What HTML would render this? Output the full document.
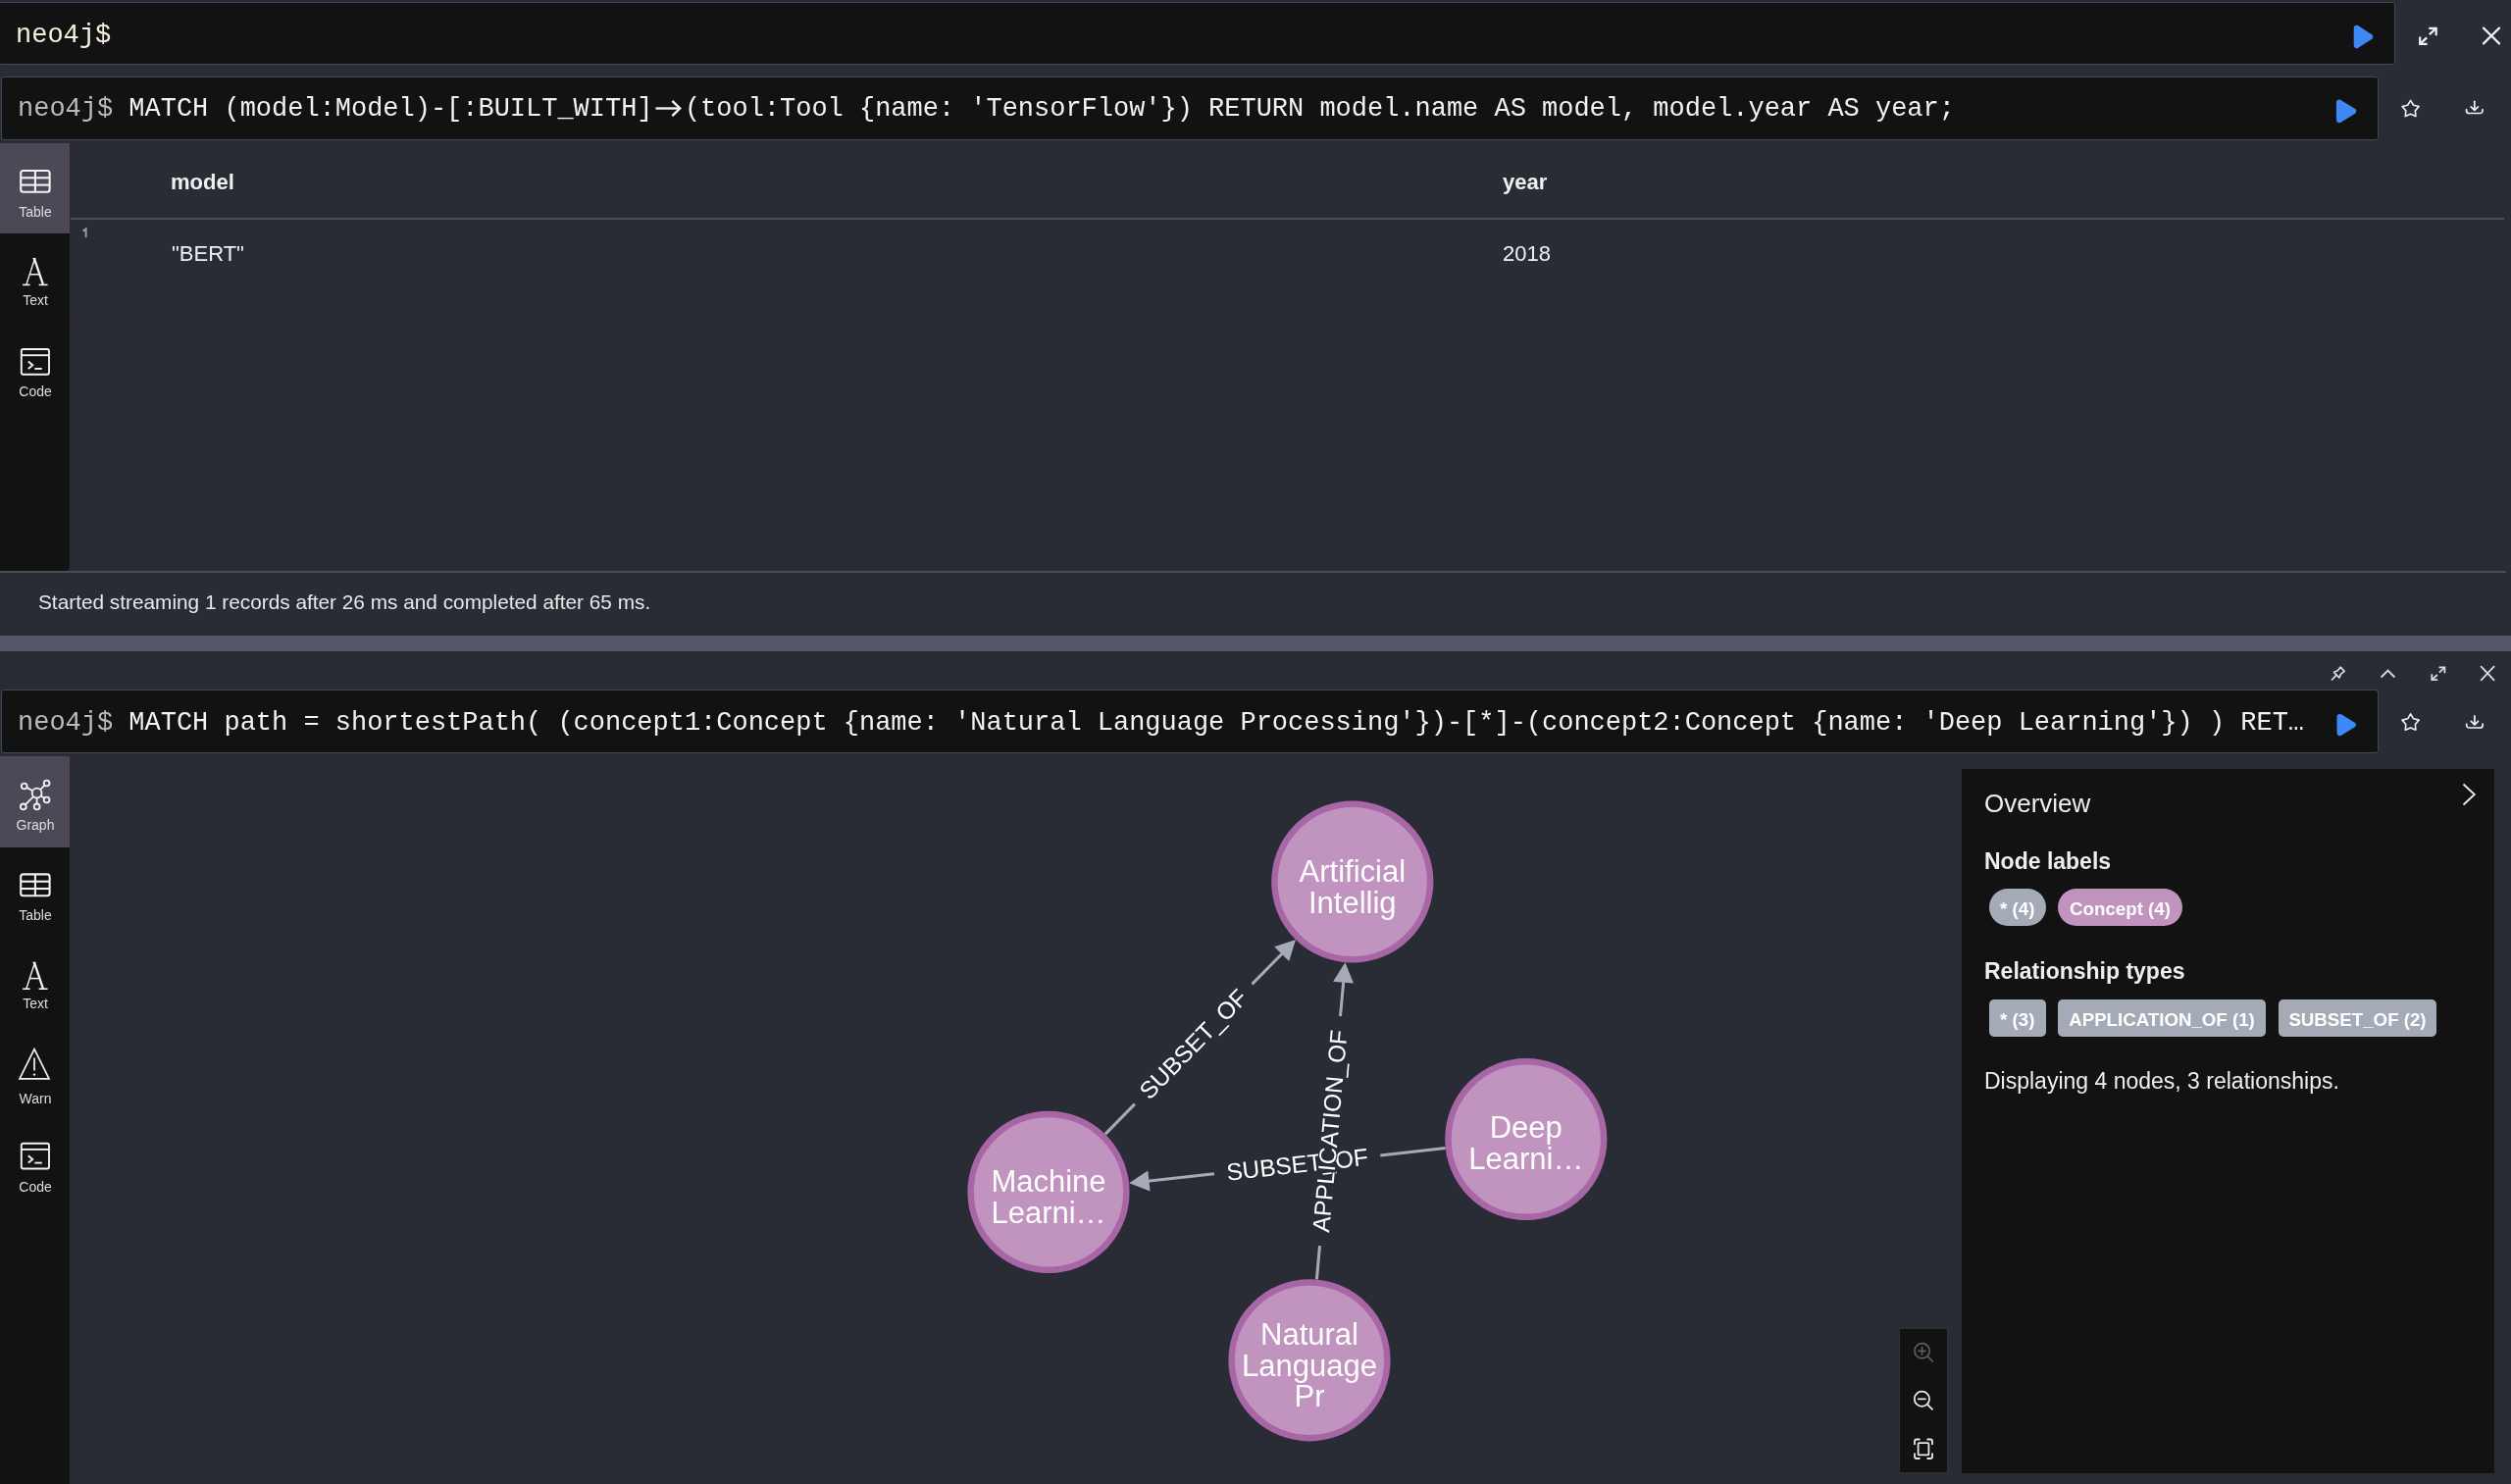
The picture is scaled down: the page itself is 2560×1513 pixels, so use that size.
<!DOCTYPE html>
<html><head><meta charset="utf-8"><style>
html,body{margin:0;padding:0;}
body{width:2560px;height:1513px;background:#292c35;position:relative;overflow:hidden;font-family:'Liberation Sans', sans-serif;}
.t{position:absolute;line-height:1;white-space:nowrap;will-change:transform;}
.r{position:absolute;}
.lig{display:inline-block;width:2ch;text-align:center;}
.pill{color:#fff;font-weight:bold;font-size:18.7px;box-sizing:border-box;padding-top:1.5px;text-align:center;white-space:nowrap;}
.lbl{width:80px;text-align:center;font-size:14px;color:#dedede;}
svg.g{position:absolute;left:0;top:0;will-change:transform;}
.pill{will-change:transform;}
</style></head><body>
<div class="r" style="left:-2px;top:1.8px;width:2443.5px;height:64px;background:#121212;border:1px solid #3b4a57;border-radius:3px;box-sizing:border-box;"></div>
<div class="t" style="left:16.0px;top:22.5px;font-size:27px;color:#f5f0de;font-weight:normal;font-family:'Liberation Mono', monospace;transform:scaleY(1.04);transform-origin:0 20.7px;">neo4j$</div>
<div class="r" style="left:1px;top:78.3px;width:2423.5px;height:64.5px;background:#121212;border:1px solid #3b4a57;border-radius:3px;box-sizing:border-box;"></div>
<div class="t" style="left:18.0px;top:98.3px;font-size:27px;color:#f2f2f2;font-weight:normal;font-family:'Liberation Mono', monospace;white-space:pre;letter-spacing:-0.015px;transform:scaleY(1.04);transform-origin:0 20.7px;"><span style="color:#b8babf">neo4j$ </span>MATCH (model:Model)-[:BUILT_WITH]  (tool:Tool {name: 'TensorFlow'}) RETURN model.name AS model, model.year AS year;</div>
<div class="r" style="left:0px;top:146px;width:71px;height:436px;background:#121212;border-bottom-right-radius:4px;"></div>
<div class="r" style="left:0px;top:146px;width:71px;height:92px;background:#4c4855;"></div>
<div class="t" style="left:173.6px;top:175.2px;font-size:22px;color:#f0f0f0;font-weight:bold;font-family:'Liberation Sans', sans-serif;">model</div>
<div class="t" style="left:1531.5px;top:175.2px;font-size:22px;color:#f0f0f0;font-weight:bold;font-family:'Liberation Sans', sans-serif;">year</div>
<div class="r" style="left:72px;top:222.2px;width:2482px;height:1.4px;background:#4a4d55;"></div>
<div class="r" style="left:73.5px;top:329.4px;width:2479px;height:2.6px;background:#2a2b31;"></div>
<div class="r" style="left:2552.5px;top:146px;width:2.6px;height:184px;background:#2a2b31;"></div>
<div class="t" style="left:174.5px;top:248.0px;font-size:22px;color:#f0f0f0;font-weight:normal;font-family:'Liberation Sans', sans-serif;">"BERT"</div>
<div class="t" style="left:1532.0px;top:248.0px;font-size:22px;color:#f0f0f0;font-weight:normal;font-family:'Liberation Sans', sans-serif;">2018</div>
<div class="r" style="left:0px;top:582.3px;width:2555px;height:1.4px;background:#4a4d55;"></div>
<div class="t" style="left:38.5px;top:604.2px;font-size:20.8px;color:#e8e8e8;font-weight:normal;font-family:'Liberation Sans', sans-serif;">Started streaming 1 records after 26 ms and completed after 65 ms.</div>
<div class="r" style="left:0px;top:648px;width:2560px;height:15.5px;background:#535664;"></div>
<div class="r" style="left:1px;top:703.3px;width:2423.5px;height:64.5px;background:#121212;border:1px solid #3b4a57;border-radius:3px;box-sizing:border-box;"></div>
<div class="t" style="left:18.0px;top:724.2px;font-size:27px;color:#f2f2f2;font-weight:normal;font-family:'Liberation Mono', monospace;white-space:pre;letter-spacing:-0.015px;transform:scaleY(1.04);transform-origin:0 20.7px;"><span style="color:#b8babf">neo4j$ </span>MATCH path = shortestPath( (concept1:Concept {name: 'Natural Language Processing'})-[*]-(concept2:Concept {name: 'Deep Learning'}) ) RET&hellip;</div>
<div class="r" style="left:0px;top:771px;width:71px;height:2560px;background:#121212;"></div>
<div class="r" style="left:0px;top:771px;width:71px;height:93px;background:#4c4855;"></div>
<div class="r" style="left:2000px;top:784px;width:543px;height:717.6px;background:#121212;"></div>
<div class="t" style="left:2023.2px;top:806.2px;font-size:26px;color:#eeeeee;font-weight:normal;font-family:'Liberation Sans', sans-serif;">Overview</div>
<div class="t" style="left:2023.0px;top:866.9px;font-size:23px;color:#eeeeee;font-weight:bold;font-family:'Liberation Sans', sans-serif;">Node labels</div>
<div class="t" style="left:2023.0px;top:978.5px;font-size:23px;color:#eeeeee;font-weight:bold;font-family:'Liberation Sans', sans-serif;">Relationship types</div>
<div class="t" style="left:2023.0px;top:1091.3px;font-size:23px;color:#eeeeee;font-weight:normal;font-family:'Liberation Sans', sans-serif;">Displaying 4 nodes, 3 relationships.</div>
<div class="r pill" style="left:2028px;top:906.3px;width:57.5px;height:38.4px;background:#a5abb6;border-radius:19.2px;line-height:38.4px;">* (4)</div>
<div class="r pill" style="left:2098.1px;top:906.3px;width:127px;height:38.4px;background:#c193bf;border-radius:19.2px;line-height:38.4px;">Concept (4)</div>
<div class="r pill" style="left:2028px;top:1019.1px;width:57.5px;height:38.4px;background:#a5abb6;border-radius:5px;line-height:38.4px;">* (3)</div>
<div class="r pill" style="left:2098.1px;top:1019.1px;width:212px;height:38.4px;background:#a5abb6;border-radius:5px;line-height:38.4px;">APPLICATION_OF (1)</div>
<div class="r pill" style="left:2322.8px;top:1019.1px;width:161px;height:38.4px;background:#a5abb6;border-radius:5px;line-height:38.4px;">SUBSET_OF (2)</div>
<div class="r" style="left:1935.6px;top:1353.8px;width:50.4px;height:148px;background:#121212;border:1px solid #333336;box-sizing:border-box;"></div>
<div class="t lbl" style="left:-4.5px;top:208.8px;">Table</div>
<div class="t lbl" style="left:-4.5px;top:298.8px;">Text</div>
<div class="t lbl" style="left:-4.5px;top:391.8px;">Code</div>
<div class="t lbl" style="left:-4.299999999999997px;top:834.3px;">Graph</div>
<div class="t lbl" style="left:-4.299999999999997px;top:925.8px;">Table</div>
<div class="t lbl" style="left:-4.299999999999997px;top:1016.3px;">Text</div>
<div class="t lbl" style="left:-4.299999999999997px;top:1113.0px;">Warn</div>
<div class="t lbl" style="left:-4.299999999999997px;top:1202.6px;">Code</div>
<svg class="g" width="2560" height="1513" viewBox="0 0 2560 1513">
<line x1="1126.8" y1="1156.4" x2="1156.9" y2="1125.6" stroke="#a5abb6" stroke-width="3"/>
<line x1="1276.5" y1="1003.4" x2="1308.1" y2="971.2" stroke="#a5abb6" stroke-width="3"/>
<polygon points="1321.0,958.0 1314.2,980.0 1299.2,965.3" fill="#a5abb6"/>
<text transform="translate(1216.7,1064.5) rotate(-45.60)" x="0" y="8.4" text-anchor="middle" font-size="24.4" fill="#ffffff" stroke="#292c35" stroke-width="2.2" paint-order="stroke" font-family="Liberation Sans, sans-serif">SUBSET_OF</text>
<line x1="1473.7" y1="1170.6" x2="1407.3" y2="1177.9" stroke="#a5abb6" stroke-width="3"/>
<line x1="1237.9" y1="1196.7" x2="1169.5" y2="1204.3" stroke="#a5abb6" stroke-width="3"/>
<polygon points="1151.1,1206.3 1170.3,1193.6 1172.6,1214.5" fill="#a5abb6"/>
<text transform="translate(1322.6,1187.3) rotate(-6.32)" x="0" y="8.4" text-anchor="middle" font-size="24.4" fill="#ffffff" stroke="#292c35" stroke-width="2.2" paint-order="stroke" font-family="Liberation Sans, sans-serif">SUBSET_OF</text>
<line x1="1342.4" y1="1304.5" x2="1345.5" y2="1270.1" stroke="#a5abb6" stroke-width="3"/>
<line x1="1366.5" y1="1036.1" x2="1369.8" y2="999.7" stroke="#a5abb6" stroke-width="3"/>
<polygon points="1371.4,981.3 1380.0,1002.6 1359.1,1000.7" fill="#a5abb6"/>
<text transform="translate(1356.0,1153.1) rotate(-84.87)" x="0" y="8.4" text-anchor="middle" font-size="24.4" fill="#ffffff" stroke="#292c35" stroke-width="2.2" paint-order="stroke" font-family="Liberation Sans, sans-serif">APPLICATION_OF</text>
<circle cx="1378.8" cy="899.0" r="79.35" fill="#c193bf" stroke="#a866a6" stroke-width="6.5"/>
<text x="1378.8" y="899.0" text-anchor="middle" font-size="31" fill="#ffffff" font-family="Liberation Sans, sans-serif">Artificial</text>
<text x="1378.8" y="930.6" text-anchor="middle" font-size="31" fill="#ffffff" font-family="Liberation Sans, sans-serif">Intellig</text>
<circle cx="1069.0" cy="1215.4" r="79.35" fill="#c193bf" stroke="#a866a6" stroke-width="6.5"/>
<text x="1069.0" y="1215.0" text-anchor="middle" font-size="31" fill="#ffffff" font-family="Liberation Sans, sans-serif">Machine</text>
<text x="1069.0" y="1246.6" text-anchor="middle" font-size="31" fill="#ffffff" font-family="Liberation Sans, sans-serif">Learni&hellip;</text>
<circle cx="1555.8" cy="1161.5" r="79.35" fill="#c193bf" stroke="#a866a6" stroke-width="6.5"/>
<text x="1555.8" y="1160.4" text-anchor="middle" font-size="31" fill="#ffffff" font-family="Liberation Sans, sans-serif">Deep</text>
<text x="1555.8" y="1192.0" text-anchor="middle" font-size="31" fill="#ffffff" font-family="Liberation Sans, sans-serif">Learni&hellip;</text>
<circle cx="1335.0" cy="1386.8" r="79.35" fill="#c193bf" stroke="#a866a6" stroke-width="6.5"/>
<text x="1335.0" y="1371.0" text-anchor="middle" font-size="31" fill="#ffffff" font-family="Liberation Sans, sans-serif">Natural</text>
<text x="1335.0" y="1402.6" text-anchor="middle" font-size="31" fill="#ffffff" font-family="Liberation Sans, sans-serif">Language</text>
<text x="1335.0" y="1434.2" text-anchor="middle" font-size="31" fill="#ffffff" font-family="Liberation Sans, sans-serif">Pr</text>
<g fill="none" stroke="#f2f2f2" stroke-width="2.4"><line x1="668.5" y1="110.5" x2="693" y2="110.5"/><polyline points="685.4,102.8 693.2,110.5 685.4,118.2"/></g>
<polygon points="2402.7,28.8 2416.2,37.5 2402.7,46.1" fill="#3d88f5" stroke="#3d88f5" stroke-width="6" stroke-linejoin="round"/>
<polygon points="2384.9,104.6 2399.2,113.4 2384.9,122.2" fill="#3d88f5" stroke="#3d88f5" stroke-width="6" stroke-linejoin="round"/>
<polygon points="2385.5,730.9 2398.8,739.0 2385.5,747.2" fill="#3d88f5" stroke="#3d88f5" stroke-width="6" stroke-linejoin="round"/>
<g fill="none" stroke="#f2f2f2" stroke-width="2.2" stroke-linecap="butt"><polyline points="2476.3,28.8 2483.7,28.8 2483.7,36.2"/><line x1="2483.7" y1="28.8" x2="2476.8" y2="35.3"/><polyline points="2467.2,37.5 2467.2,44.9 2474.6,44.9"/><line x1="2467.2" y1="44.9" x2="2474.1" y2="38.4"/></g>
<g fill="none" stroke="#d8dbe0" stroke-width="1.8" stroke-linecap="butt"><polyline points="2486.5,680.4 2492.4,680.4 2492.4,686.3"/><line x1="2492.4" y1="680.4" x2="2486.9" y2="685.6"/><polyline points="2479.3,687.3 2479.3,693.2 2485.2,693.2"/><line x1="2479.3" y1="693.2" x2="2484.8" y2="688.0"/></g>
<g stroke="#f2f2f2" stroke-width="2.2" stroke-linecap="round"><line x1="2532" y1="28.6" x2="2548" y2="44.4"/><line x1="2548" y1="28.6" x2="2532" y2="44.4"/></g>
<g stroke="#d8dbe0" stroke-width="1.8" stroke-linecap="round"><line x1="2529.6" y1="679.6" x2="2542.6" y2="693.3"/><line x1="2542.6" y1="679.6" x2="2529.6" y2="693.3"/></g>
<polygon points="2457.60,102.30 2460.56,107.22 2466.16,108.52 2462.39,112.86 2462.89,118.58 2457.60,116.34 2452.31,118.58 2452.81,112.86 2449.04,108.52 2454.64,107.22" fill="none" stroke="#f2f2f2" stroke-width="1.6" stroke-linejoin="round"/>
<polygon points="2457.60,727.90 2460.56,732.82 2466.16,734.12 2462.39,738.46 2462.89,744.18 2457.60,741.94 2452.31,744.18 2452.81,738.46 2449.04,734.12 2454.64,732.82" fill="none" stroke="#f2f2f2" stroke-width="1.6" stroke-linejoin="round"/>
<g fill="none" stroke="#f2f2f2" stroke-width="1.7" stroke-linecap="round" stroke-linejoin="round"><line x1="2522.8" y1="103.3" x2="2522.8" y2="112.1"/><polyline points="2519.2000000000003,108.8 2522.8,112.4 2526.4,108.8"/><path d="M2514.6000000000004,111.7 v1.2 a2.6,2.6 0 0 0 2.6,2.6 h11.2 a2.6,2.6 0 0 0 2.6,-2.6 v-1.2"/></g>
<g fill="none" stroke="#f2f2f2" stroke-width="1.7" stroke-linecap="round" stroke-linejoin="round"><line x1="2522.9" y1="729.8" x2="2522.9" y2="738.6"/><polyline points="2519.3,735.3 2522.9,738.9 2526.5,735.3"/><path d="M2514.7000000000003,738.2 v1.2 a2.6,2.6 0 0 0 2.6,2.6 h11.2 a2.6,2.6 0 0 0 2.6,-2.6 v-1.2"/></g>
<g fill="none" stroke="#d8dde6" stroke-width="1.7" stroke-linejoin="round" stroke-linecap="round"><path d="M2379.5,685.3 L2383.3,683.8 L2386.1,680.2 L2390.2,684.3 L2386.6,687.1 L2384.9,691.0 Z"/><line x1="2381.9" y1="688.3" x2="2377.4" y2="693.0"/></g>
<polyline points="2427.6,690.5 2434.5,683.5 2441.4,690.5" fill="none" stroke="#d8dbe0" stroke-width="1.8"/>
<polyline points="2511.5,799.5 2522.8,810 2511.5,820.5" fill="none" stroke="#eeeeee" stroke-width="1.8"/>
<g fill="none" stroke="#5b5b5b" stroke-width="1.8" stroke-linecap="round"><circle cx="1959.6" cy="1377.3" r="7.6"/><line x1="1965.1999999999998" y1="1382.8999999999999" x2="1970.1999999999998" y2="1387.8999999999999"/><line x1="1956.0" y1="1377.3" x2="1963.1999999999998" y2="1377.3"/><line x1="1959.6" y1="1373.7" x2="1959.6" y2="1380.8999999999999"/></g>
<g fill="none" stroke="#e8e8e8" stroke-width="1.8" stroke-linecap="round"><circle cx="1959.4" cy="1426.3" r="7.6"/><line x1="1965.0" y1="1431.8999999999999" x2="1970.0" y2="1436.8999999999999"/><line x1="1955.8000000000002" y1="1426.3" x2="1963.0" y2="1426.3"/></g>
<g fill="none" stroke="#e8e8e8" stroke-width="1.8"><path d="M1952,1473 v-3.5 a2,2 0 0 1 2,-2 h3.5 M1964.5,1467.5 h3.5 a2,2 0 0 1 2,2 v3.5 M1970,1481.5 v3.5 a2,2 0 0 1 -2,2 h-3.5 M1957.5,1487 h-3.5 a2,2 0 0 1 -2,-2 v-3.5"/><rect x="1955.6" y="1471.2" width="10.8" height="12.2" rx="1"/></g>
<g fill="none" stroke="#f2f2f2" stroke-width="2.1"><rect x="21.2" y="174" width="29.4" height="21.8" rx="2.5"/><line x1="21.2" y1="181.3" x2="50.599999999999994" y2="181.3"/><line x1="21.2" y1="188.6" x2="50.599999999999994" y2="188.6"/><line x1="35.9" y1="174" x2="35.9" y2="195.8"/></g>
<g fill="none" stroke="#f2f2f2" stroke-linecap="butt"><line x1="26.8" y1="290.40000000000003" x2="35.300000000000004" y2="264.20000000000005" stroke-width="1.4"/><line x1="35.0" y1="263.6" x2="44.0" y2="290.40000000000003" stroke-width="2.3"/><line x1="30.400000000000002" y1="279.76000000000005" x2="41.0" y2="279.76000000000005" stroke-width="1.5"/><line x1="23.1" y1="290.40000000000003" x2="30.6" y2="290.40000000000003" stroke-width="1.6"/><line x1="39.6" y1="290.40000000000003" x2="48.6" y2="290.40000000000003" stroke-width="1.6"/><line x1="33.4" y1="263.6" x2="36.4" y2="263.6" stroke-width="1.4"/></g>
<g fill="none" stroke="#f2f2f2" stroke-width="1.9"><rect x="21.8" y="356" width="28.2" height="25.8" rx="2"/><line x1="21.8" y1="362.2" x2="50.0" y2="362.2"/><polyline points="28.8,368.5 33.3,372.2 28.8,375.9"/><line x1="35.3" y1="375.9" x2="42.8" y2="375.9"/></g>
<g fill="none" stroke="#f2f2f2" stroke-width="1.85"><circle cx="37.6" cy="808.6" r="4.9"/><line x1="33.31" y1="806.24" x2="27.24" y2="802.90"/><circle cx="24.7" cy="801.5" r="2.9"/><line x1="41.05" y1="805.12" x2="45.56" y2="800.56"/><circle cx="47.6" cy="798.5" r="2.9"/><line x1="41.63" y1="811.38" x2="45.21" y2="813.85"/><circle cx="47.6" cy="815.5" r="2.9"/><line x1="34.14" y1="812.06" x2="25.85" y2="820.35"/><circle cx="23.8" cy="822.4" r="2.9"/><line x1="37.60" y1="813.50" x2="37.60" y2="819.50"/><circle cx="37.6" cy="822.4" r="2.9"/></g>
<g fill="none" stroke="#f2f2f2" stroke-width="2.1"><rect x="21.2" y="891.4" width="29.4" height="21.8" rx="2.5"/><line x1="21.2" y1="898.6999999999999" x2="50.599999999999994" y2="898.6999999999999"/><line x1="21.2" y1="906.0" x2="50.599999999999994" y2="906.0"/><line x1="35.9" y1="891.4" x2="35.9" y2="913.1999999999999"/></g>
<g fill="none" stroke="#f2f2f2" stroke-linecap="butt"><line x1="26.8" y1="1008.2" x2="35.300000000000004" y2="982.0" stroke-width="1.4"/><line x1="35.0" y1="981.4" x2="44.0" y2="1008.2" stroke-width="2.3"/><line x1="30.400000000000002" y1="997.56" x2="41.0" y2="997.56" stroke-width="1.5"/><line x1="23.1" y1="1008.2" x2="30.6" y2="1008.2" stroke-width="1.6"/><line x1="39.6" y1="1008.2" x2="48.6" y2="1008.2" stroke-width="1.6"/><line x1="33.4" y1="981.4" x2="36.4" y2="981.4" stroke-width="1.4"/></g>
<g fill="none" stroke="#f2f2f2" stroke-width="1.7" stroke-linejoin="miter"><polygon points="35,1069.6 50,1099.8 20,1099.8"/><line x1="35" y1="1078.6" x2="35" y2="1091.6"/></g><circle cx="35" cy="1095.6" r="1.2" fill="#f2f2f2"/>
<g fill="none" stroke="#f2f2f2" stroke-width="1.9"><rect x="21.8" y="1165.7" width="28.2" height="25.8" rx="2"/><line x1="21.8" y1="1171.9" x2="50.0" y2="1171.9"/><polyline points="28.8,1178.2 33.3,1181.9 28.8,1185.6000000000001"/><line x1="35.3" y1="1185.6000000000001" x2="42.8" y2="1185.6000000000001"/></g>
<path d="M84.6,235.6 L87.6,233.4 L87.6,242" fill="none" stroke="#9a9ca3" stroke-width="2" stroke-linejoin="miter"/>
</svg>
</body></html>
